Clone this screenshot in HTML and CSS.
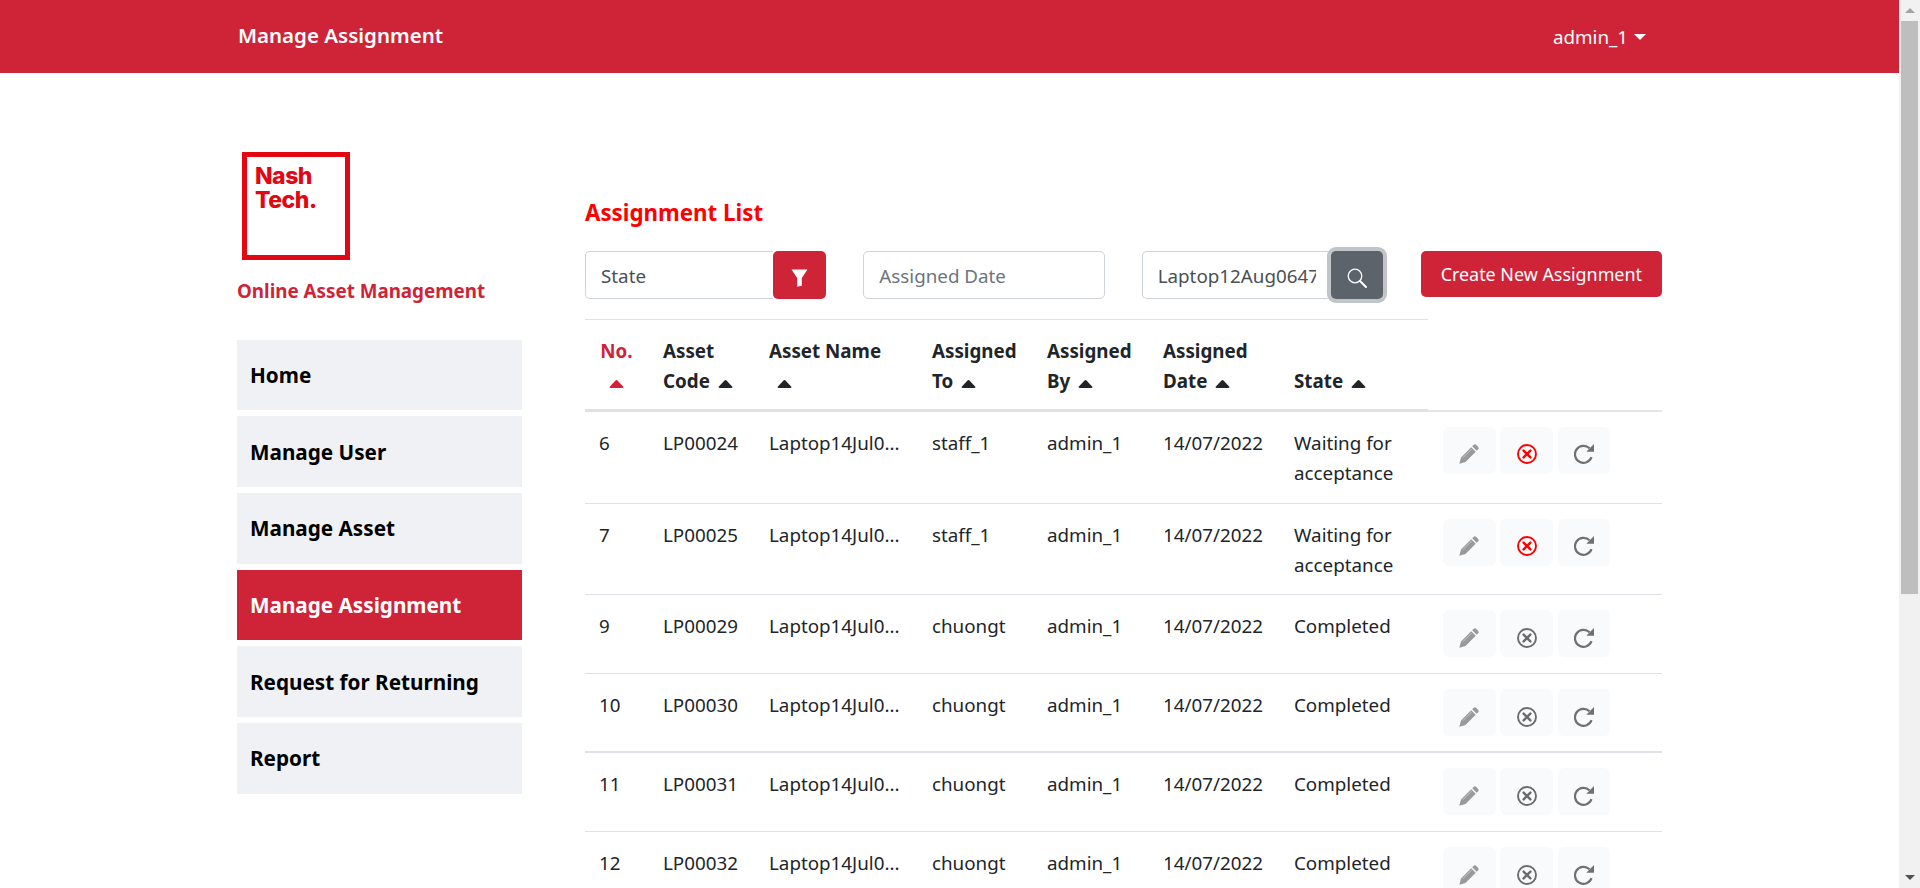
FILE: index.html
```html
<!DOCTYPE html>
<html lang="en">
<head>
    <meta charset="UTF-8">
    <meta name="viewport" content="width=device-width, initial-scale=1.0">
    <title>Manage Assignment</title>
    <link rel="stylesheet" href="styles.css">
</head>
<body>
    <svg class="icon-defs" width="0" height="0">
        <symbol id="i-up" viewBox="0 0 14 8"><path d="M6 .6a1.4 1.4 0 0 1 2 0L13.6 6.4c.7.7.2 1.6-.7 1.6H1.1C.2 8-.3 7.100.4 6.400z"/></symbol>
        <symbol id="i-pencil" viewBox="0 0 20 20"><path d="M14.500 1a2 2 0 0 1 2.800 0l1.700 1.700a2 2 0 0 1 0 2.800l-1.300 1.300-4.500-4.500zM12.200 3.300l4.500 4.500L6.500 18 .3 19.700 2 13.500z"/><path d="M3.800 13.800l9-9" stroke="#d0d0d0" stroke-width=".8"/></symbol>
        <symbol id="i-cancel" viewBox="0 0 20 20"><circle cx="10" cy="10" r="9" fill="none" stroke="currentColor" stroke-width="1.900"/><path d="M6.600 6.600l6.800 6.800M13.400 6.600l-6.800 6.800" stroke="currentColor" stroke-width="2.400" stroke-linecap="round"/></symbol>
        <symbol id="i-redo" viewBox="0 0 20 20"><path d="M17.500 13.200A8.500 8.500 0 1 1 15.500 4.300" fill="none" stroke="currentColor" stroke-width="2.200"/><path d="M12.300 7.700H20V0z" fill="currentColor"/></symbol>
    </svg>

    <div class="window">
        <div class="page">
            <header class="topbar">
                <div class="topbar-title">Manage Assignment</div>
                <div class="topbar-user">admin_1 <span class="caret"></span></div>
            </header>

            <div class="content">
                <aside class="sidebar">
                    <div class="logo">
                        <div class="logo-text">Nash<br>Tech.</div>
                    </div>
                    <div class="app-name">Online Asset Management</div>
                    <nav class="menu">
                        <a class="menu-item">Home</a>
                        <a class="menu-item">Manage User</a>
                        <a class="menu-item">Manage Asset</a>
                        <a class="menu-item active">Manage Assignment</a>
                        <a class="menu-item">Request for Returning</a>
                        <a class="menu-item">Report</a>
                    </nav>
                </aside>

                <main class="list">
                    <h1 class="list-title">Assignment List</h1>
                    <div class="toolbar">
                        <div class="state-filter">
                            <div class="field state-field">State</div>
                            <button class="filter-btn">
                                <svg width="17" height="18" viewBox="0 0 17 18"><path d="M.5 .5h16L10.800 9v7.800l-4.600 1V9z" fill="#fff"/></svg>
                            </button>
                        </div>
                        <div class="field date-field">Assigned Date</div>
                        <div class="search">
                            <div class="field search-field"><span class="search-text">Laptop12Aug0647</span></div>
                            <button class="search-btn">
                                <svg width="20" height="20" viewBox="0 0 20 20" fill="none" stroke="#fff"><circle cx="8" cy="8" r="6.800" stroke-width="1.300"/><path d="M13 13l6 6" stroke-width="2" stroke-linecap="round"/></svg>
                            </button>
                        </div>
                        <button class="create-btn">Create New Assignment</button>
                    </div>

                    <table class="grid">
                        <thead>
                            <tr>
                                <th class="col-no sorted">No.<br><svg class="sort"><use href="#i-up"/></svg></th>
                                <th class="col-code">Asset Code<svg class="sort"><use href="#i-up"/></svg></th>
                                <th class="col-name">Asset Name<svg class="sort"><use href="#i-up"/></svg></th>
                                <th class="col-to">Assigned To<svg class="sort"><use href="#i-up"/></svg></th>
                                <th class="col-by">Assigned By<svg class="sort"><use href="#i-up"/></svg></th>
                                <th class="col-date">Assigned Date<svg class="sort"><use href="#i-up"/></svg></th>
                                <th class="col-state">State<svg class="sort"><use href="#i-up"/></svg></th>
                                <th class="col-actions"></th>
                            </tr>
                        </thead>
                        <tbody>
                            <tr>
                                <td>6</td><td>LP00024</td><td>Laptop14Jul0...</td><td>staff_1</td><td>admin_1</td><td>14/07/2022</td><td>Waiting for acceptance</td>
                                <td class="actions"><span class="act"><svg class="pencil"><use href="#i-pencil"/></svg></span><span class="act"><svg class="cancel on"><use href="#i-cancel"/></svg></span><span class="act"><svg class="redo"><use href="#i-redo"/></svg></span></td>
                            </tr>
                            <tr>
                                <td>7</td><td>LP00025</td><td>Laptop14Jul0...</td><td>staff_1</td><td>admin_1</td><td>14/07/2022</td><td>Waiting for acceptance</td>
                                <td class="actions"><span class="act"><svg class="pencil"><use href="#i-pencil"/></svg></span><span class="act"><svg class="cancel on"><use href="#i-cancel"/></svg></span><span class="act"><svg class="redo"><use href="#i-redo"/></svg></span></td>
                            </tr>
                            <tr>
                                <td>9</td><td>LP00029</td><td>Laptop14Jul0...</td><td>chuongt</td><td>admin_1</td><td>14/07/2022</td><td>Completed</td>
                                <td class="actions"><span class="act"><svg class="pencil"><use href="#i-pencil"/></svg></span><span class="act"><svg class="cancel"><use href="#i-cancel"/></svg></span><span class="act"><svg class="redo"><use href="#i-redo"/></svg></span></td>
                            </tr>
                            <tr class="seam">
                                <td>10</td><td>LP00030</td><td>Laptop14Jul0...</td><td>chuongt</td><td>admin_1</td><td>14/07/2022</td><td>Completed</td>
                                <td class="actions"><span class="act"><svg class="pencil"><use href="#i-pencil"/></svg></span><span class="act"><svg class="cancel"><use href="#i-cancel"/></svg></span><span class="act"><svg class="redo"><use href="#i-redo"/></svg></span></td>
                            </tr>
                            <tr>
                                <td>11</td><td>LP00031</td><td>Laptop14Jul0...</td><td>chuongt</td><td>admin_1</td><td>14/07/2022</td><td>Completed</td>
                                <td class="actions"><span class="act"><svg class="pencil"><use href="#i-pencil"/></svg></span><span class="act"><svg class="cancel"><use href="#i-cancel"/></svg></span><span class="act"><svg class="redo"><use href="#i-redo"/></svg></span></td>
                            </tr>
                            <tr>
                                <td>12</td><td>LP00032</td><td>Laptop14Jul0...</td><td>chuongt</td><td>admin_1</td><td>14/07/2022</td><td>Completed</td>
                                <td class="actions"><span class="act"><svg class="pencil"><use href="#i-pencil"/></svg></span><span class="act"><svg class="cancel"><use href="#i-cancel"/></svg></span><span class="act"><svg class="redo"><use href="#i-redo"/></svg></span></td>
                            </tr>
                        </tbody>
                    </table>
                </main>
            </div>
        </div>

        <div class="scrollbar">
            <div class="scroll-arrow scroll-up"></div>
            <div class="scroll-thumb"></div>
            <div class="scroll-arrow scroll-down"></div>
        </div>
    </div>
</body>
</html>
```

FILE: styles.css
```css
* {
    box-sizing: border-box;
}

html, body {
    margin: 0;
    padding: 0;
    height: 100%;
    overflow: hidden;
}

body {
    font-family: "Noto Sans", "Open Sans", sans-serif;
    font-size: 16px;
    color: #212529;
    background-color: white;
}

.icon-defs {
    display: block;
    height: 0;
}

.window {
    display: flex;
    height: 888px;
}

.page {
    flex-grow: 1;
    overflow: hidden;
    min-width: 0;
}

/* top bar */
.topbar {
    display: flex;
    justify-content: space-between;
    align-items: center;
    height: 73px;
    padding: 0 253px 0 238px;
    background-color: #cf2338;
    color: white;
}

.topbar-title {
    font-size: 20.500px;
    font-weight: 600;
    margin-top: -3px;
}

.topbar-user {
    font-size: 18.800px;
    margin-top: 1px;
}

.caret {
    display: inline-block;
    margin-left: 1px;
    vertical-align: 4px;
    border-top: 6px solid white;
    border-left: 6px solid transparent;
    border-right: 6px solid transparent;
}

.content {
    display: flex;
    padding: 79px 0 0 237px;
}

/* sidebar */
.sidebar {
    width: 285px;
    flex-shrink: 0;
}

.logo {
    width: 108px;
    height: 108px;
    margin-left: 5px;
    padding: 7px 0 0 8px;
    border: 5px solid #e30613;
}

.logo-text {
    color: #e30613;
    font-family: "Inter", sans-serif;
    font-size: 23px;
    font-weight: 800;
    line-height: 24px;
    letter-spacing: -0.5px;
}

.app-name {
    margin-top: 18px;
    color: #cf2338;
    font-size: 18.800px;
    font-weight: 700;
    white-space: nowrap;
}

.menu {
    display: flex;
    flex-direction: column;
    gap: 6px;
    margin-top: 35.500px;
}

.menu-item {
    display: flex;
    align-items: center;
    height: 70.700px;
    padding-left: 13px;
    background-color: #eff1f5;
    color: black;
    font-size: 20.700px;
    font-weight: 700;
}

.menu-item.active {
    background-color: #cf2338;
    color: white;
}

/* list */
.list {
    width: 1077px;
    margin-left: 63px;
    flex-shrink: 0;
}

.list-title {
    margin: 46px 0 0;
    color: red;
    font-size: 22.300px;
    font-weight: 700;
    line-height: 30px;
}

.toolbar {
    display: flex;
    align-items: flex-start;
    margin-top: 23px;
}

.state-filter {
    display: flex;
    width: 242px;
}

.field {
    height: 48px;
    padding: 2px 15px 0;
    display: flex;
    align-items: center;
    border: 1px solid #ced4da;
    border-radius: 5px;
    font-size: 18.800px;
    color: #6c757d;
    background-color: white;
}

.state-field {
    flex-grow: 1;
    color: #495057;
    border-radius: 5px 0 0 5px;
    border-right: none;
}

.filter-btn {
    width: 53px;
    height: 48px;
    border: none;
    border-radius: 5px;
    background-color: #cf2338;
    display: flex;
    align-items: center;
    justify-content: center;
    padding: 5px 0 0;
}

.date-field {
    width: 242px;
    margin-left: 37px;
}

.search {
    display: flex;
    width: 241px;
    margin-left: 37px;
}

.search-field {
    flex-grow: 1;
    min-width: 0;
    color: #495057;
    border-radius: 5px 0 0 5px;
    border-right: none;
}

.search-text {
    display: block;
    width: 158px;
    overflow: hidden;
    white-space: nowrap;
}

.search-btn {
    width: 52px;
    height: 48px;
    flex-shrink: 0;
    border: none;
    border-radius: 5px;
    background-color: #5c636a;
    box-shadow: 0 0 0 4px #c1c4c8;
    display: flex;
    align-items: center;
    justify-content: center;
    padding: 5px 0 0;
}

.create-btn {
    width: 242px;
    height: 46px;
    margin-left: 38px;
    border: none;
    border-radius: 5px;
    background-color: #cf2338;
    color: white;
    font-family: inherit;
    font-size: 17.900px;
    padding: 0;
}

/* table */
.grid {
    width: 100%;
    margin-top: 20px;
    border-collapse: collapse;
    table-layout: fixed;
    line-height: 30px;
    font-size: 18.800px;
}

.grid th {
    padding: 16px 15px 13px;
    font-weight: 700;
    text-align: left;
    vertical-align: bottom;
    border-top: 1px solid #dee2e6;
    border-bottom: 3px solid #dee2e6;
}

.grid th.col-actions {
    border-top: none;
    border-bottom: 2px solid #e2e5e8;
}

.grid th.sorted {
    color: #cf2338;
}

.sort {
    width: 15px;
    height: 8px;
    margin-left: 8px;
    fill: currentColor;
    vertical-align: 0;
}

.col-no { width: 63px; }
.col-code { width: 106px; }
.col-name { width: 163px; }
.col-to { width: 115px; }
.col-by { width: 116px; }
.col-date { width: 131px; }
.col-state { width: 149px; }

.grid th.col-no {
    text-align: center;
    padding-left: 0;
    padding-right: 0;
}

.col-no .sort {
    margin-left: 0;
}

.grid td {
    padding: 16px 15px 14.500px;
    vertical-align: top;
    border-bottom: 1px solid #dee2e6;
}

.grid td:first-child {
    padding-left: 14px;
}

.grid td.actions {
    padding: 15px 0 16px 15px;
    white-space: nowrap;
}

.grid .seam td {
    border-bottom: 2px solid #dee2e6;
}

.grid .seam td.actions {
    padding-bottom: 15px;
}

.act {
    display: inline-flex;
    align-items: center;
    justify-content: center;
    width: 52.500px;
    height: 47px;
    margin-right: 4.800px;
    border-radius: 6px;
    background-color: #f9fafb;
    vertical-align: top;
}

.act svg {
    width: 20px;
    height: 20px;
    margin-top: 8px;
}

.pencil {
    fill: #999;
    color: #999;
}

.cancel {
    color: #6c6c6c;
}

.cancel.on {
    color: #ff0000;
}

.redo {
    color: #707070;
}

/* scrollbar, the page is longer than the window */
.scrollbar {
    width: 21px;
    flex-shrink: 0;
    display: flex;
    flex-direction: column;
    background-color: #f1f1f1;
}

.scroll-arrow {
    height: 21px;
    display: flex;
    align-items: center;
    justify-content: center;
}

.scroll-up::before {
    content: "";
    border-bottom: 5px solid #a3a3a3;
    border-left: 5px solid transparent;
    border-right: 5px solid transparent;
}

.scroll-down::before {
    content: "";
    border-top: 5px solid #505050;
    border-left: 5px solid transparent;
    border-right: 5px solid transparent;
}

.scroll-thumb {
    height: 573px;
    margin: 0 2px;
    background-color: #bebebe;
}

.scroll-down {
    margin-top: auto;
}
```
